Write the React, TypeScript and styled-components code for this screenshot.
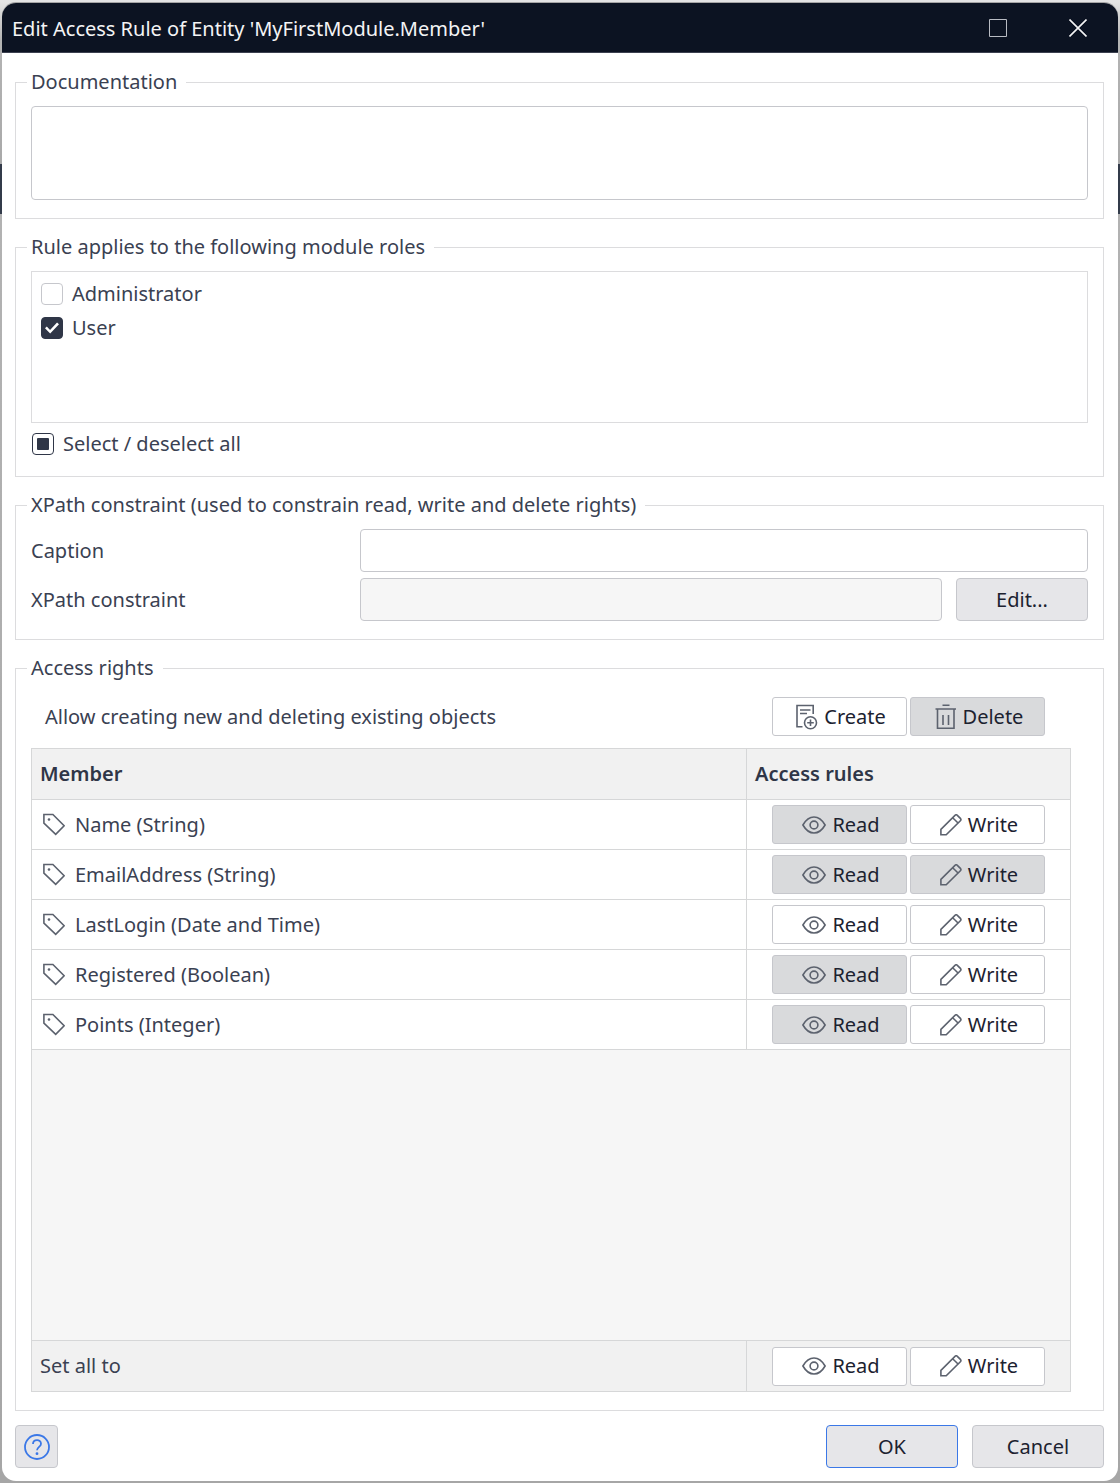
import React, { useEffect, useId, useRef, useState } from "react";
import styled, { createGlobalStyle, css } from "styled-components";

const color = {
  text: "#3a4152",
  strong: "#2f3647",
  ink: "#1c2230",
  icon: "#5c626e",
  groupLine: "#dcdcde",
  gridLine: "#d6d7d8",
  control: "#c6c7cc",
  face: "#e6e6e9",
  pressed: "#d9dadc",
  header: "#f1f1f1",
  empty: "#f6f6f6",
  accent: "#3b78e7",
};

const GlobalStyle = createGlobalStyle`
  *, *::before, *::after { box-sizing: border-box; }
  body {
    margin: 0;
    font-family: "Noto Sans", "Open Sans", sans-serif;
    font-size: 20px;
    line-height: 28px;
    color: ${color.text};
    background: linear-gradient(#e4e4e4 0 2px, #b4b4b4 40px, #a9a9a9 164px, #333b4a 164px 214px, #b2b2b2 214px, #a6a6a6 100%);
  }
  button, input, textarea { font: inherit; color: inherit; }
`;

const Backdrop = styled.div`
  display: flex;
  min-height: 100vh;
  padding: 3px 2px 2px;
`;

const Dialog = styled.main`
  flex: 1;
  min-width: 0;
  display: flex;
  flex-direction: column;
  overflow: hidden;
  background: #fff;
  border-radius: 14px;
  box-shadow: 0 -1px 0 #a5a5a5;
`;

const TitleBar = styled.header`
  display: flex;
  align-items: center;
  height: 50px;
  padding: 2px 12px 0 10px;
  background: #0c1322;
  border-bottom: 1px solid #3c4150;
  color: #f4f4f5;
`;

const Title = styled.h1`
  flex: 1;
  margin: 0;
  font-size: 20px;
  font-weight: 400;
`;

const WindowButtons = styled.div`
  display: flex;
  gap: 24px;
`;

const WindowButton = styled.button`
  display: grid;
  place-items: center;
  width: 56px;
  height: 47px;
  padding: 0 0 2px;
  border: 0;
  background: none;
`;

const Content = styled.form`
  flex: 1;
  display: flex;
  flex-direction: column;
  gap: 14px;
  padding: 15px 14px 12px 13px;
`;

const Group = styled.fieldset`
  min-width: 0;
  margin: 0;
  padding: 0 11px 18px;
  border: 1px solid ${color.groupLine};
`;

const Legend = styled.legend`
  padding: 0 9px 0 4px;
`;

const GroupBody = styled.div`
  display: flex;
  flex-direction: column;
  padding: 10px 4px 0;
`;

const field = css`
  border: 1px solid ${color.control};
  border-radius: 4px;
  background: #fff;
`;

const DocumentationBox = styled.textarea`
  ${field}
  display: block;
  width: 100%;
  height: 94px;
  padding: 8px;
  resize: none;
`;

const RoleList = styled.ul`
  display: flex;
  flex-direction: column;
  gap: 6px;
  min-height: 152px;
  margin: 0;
  padding: 8px 9px;
  border: 1px solid ${color.groupLine};
  list-style: none;
`;

const CheckLabel = styled.label`
  display: flex;
  width: fit-content;
  align-items: center;
  gap: 9px;
`;

const SelectAllRow = styled.div`
  padding: 7px 1px 0;
`;

const CheckBox = styled.input`
  appearance: none;
  display: grid;
  place-items: center;
  width: 22px;
  height: 22px;
  margin: 0;
  border: 1px solid ${color.control};
  border-radius: 4px;
  background: #fff;

  &:checked {
    border-color: ${color.strong};
    background: ${color.strong};
  }
  &:checked::after {
    content: "";
    width: 14px;
    height: 12px;
    background: #fff;
    clip-path: polygon(0 52%, 13% 38%, 36% 66%, 86% 4%, 100% 18%, 37% 96%);
  }
  &:indeterminate {
    border-color: ${color.strong};
  }
  &:indeterminate::after {
    content: "";
    width: 12px;
    height: 12px;
    border-radius: 1px;
    background: ${color.strong};
  }
`;

const FieldGrid = styled.div`
  display: grid;
  grid-template-columns: 315px minmax(0, 1fr);
  align-items: center;
  gap: 6px 14px;
`;

const FieldLine = styled.div`
  display: flex;
  gap: 14px;
`;

const TextInput = styled.input`
  ${field}
  flex: 1;
  min-width: 0;
  height: 43px;
  padding: 0 8px;

  &:read-only {
    background: ${color.empty};
  }
`;

const Button = styled.button<{ $primary?: boolean; $square?: boolean }>`
  display: grid;
  place-items: center;
  width: ${(p) => (p.$square ? 43 : 132)}px;
  height: 43px;
  padding: 0;
  border: 1px solid ${(p) => (p.$primary ? color.accent : color.control)};
  border-radius: 4px;
  background: ${color.face};
  color: ${(p) => (p.$square ? color.accent : color.ink)};
`;

const RightsArea = styled.div`
  padding: 5px 17px 0 0;
`;

const Toolbar = styled.div`
  display: flex;
  align-items: center;
  justify-content: space-between;
  padding: 0 26px 12px 14px;
`;

const Toggles = styled.div`
  display: flex;
  gap: 3px;
`;

const Toggle = styled.button`
  display: flex;
  align-items: center;
  justify-content: center;
  gap: 6px;
  width: 135px;
  height: 39px;
  padding: 0 0 0 3px;
  border: 1px solid ${color.control};
  border-radius: 3px;
  background: #fff;
  color: ${color.ink};

  &[aria-pressed="true"] {
    background: ${color.pressed};
  }
`;

const RightsTable = styled.table`
  width: 100%;
  table-layout: fixed;
  border-collapse: collapse;
  border: 1px solid ${color.gridLine};
`;

const RulesCol = styled.col`
  width: 324px;
`;

const HeadCell = styled.th`
  height: 51px;
  padding: 0 8px;
  border: 1px solid ${color.gridLine};
  background: ${color.header};
  color: ${color.strong};
  font-weight: 600;
  text-align: left;
`;

const NameCell = styled.td<{ $footer?: boolean }>`
  height: ${(p) => (p.$footer ? 51 : 50)}px;
  padding: 0 ${(p) => (p.$footer ? 8 : 11)}px;
  border: 1px solid ${color.gridLine};
  background: ${(p) => (p.$footer ? color.header : "#fff")};
`;

const RulesCell = styled(NameCell)`
  padding: 0 25px;
`;

const Member = styled.span`
  display: flex;
  align-items: center;
  gap: 10px;
`;

const EmptyCell = styled.td`
  height: 291px;
  padding: 0;
  border: 1px solid ${color.gridLine};
  background: ${color.empty};
`;

const Actions = styled.footer`
  display: flex;
  gap: 14px;
`;

const Spacer = styled.div`
  flex: 1;
`;

const Glyph = styled.svg<{ $weight?: number }>`
  flex: none;
  fill: none;
  stroke: currentColor;
  stroke-width: ${(p) => p.$weight ?? 1.6};
`;

const ToolGlyph = styled(Glyph)`
  color: ${color.icon};
`;

const MaximizeGlyph = styled(Glyph)`
  color: #b9bcc3;
`;

const TagIcon = () => (
  <ToolGlyph width="22" height="24" viewBox="0 0 22 24">
    <path d="M.9 1.5h9l11.200 11.200-8.400 8.600L.9 10.100z" />
    <circle cx="6" cy="6.500" r="1.300" fill="currentColor" stroke="none" />
  </ToolGlyph>
);

const EyeIcon = () => (
  <ToolGlyph width="24" height="22" viewBox="0 0 24 22">
    <path d="M.9 11C4 5.600 7.800 3 12 3s8 2.600 11.100 8c-3.100 5.400-6.900 8-11.100 8S4 16.400.9 11z" />
    <circle cx="12" cy="11" r="3.900" />
  </ToolGlyph>
);

const PencilIcon = () => (
  <ToolGlyph width="22" height="22" viewBox="0 0 22 22">
    <path d="M.9 20.700v-5.300L15.200 1.100q1-.7 1.900 0l3.500 3.500q.7 1 0 1.900L6.200 20.700z" />
    <path d="M12.700 3.700l5.300 5.300" />
  </ToolGlyph>
);

const CreateIcon = () => (
  <ToolGlyph width="22" height="26" viewBox="0 0 22 26">
    <path d="M6.500 22.800H1V1.500h16.200V10M4 6h10.500M4 9.500h7" />
    <circle cx="14.500" cy="18.800" r="6" />
    <path d="M14.500 15.500v6.600M11.200 18.800h6.600" />
  </ToolGlyph>
);

const TrashIcon = () => (
  <ToolGlyph width="22" height="26" viewBox="0 0 22 26">
    <path d="M.5 5h20.500M7.500 1.300h7M2.500 5v19.200h16.500V5M8 11v10M13.500 11v10" />
  </ToolGlyph>
);

const HelpIcon = () => (
  <Glyph $weight={1.8} width="28" height="28" viewBox="0 0 28 28">
    <circle cx="14" cy="14" r="12" />
    <path d="M10 11c0-5 8-5 8-.3 0 3-4 3.300-4 6.600" />
    <circle cx="14" cy="20.700" r="1.400" fill="currentColor" stroke="none" />
  </Glyph>
);

type Rights = { read: boolean; write: boolean };
type MemberRow = Rights & { name: string };

const initialMembers: MemberRow[] = [
  { name: "Name (String)", read: true, write: false },
  { name: "EmailAddress (String)", read: true, write: true },
  { name: "LastLogin (Date and Time)", read: false, write: false },
  { name: "Registered (Boolean)", read: true, write: false },
  { name: "Points (Integer)", read: true, write: false },
];

function RightsToggles({ rights, onToggle }: { rights: Rights; onToggle: (key: keyof Rights) => void }) {
  return (
    <Toggles>
      <Toggle type="button" aria-pressed={rights.read} onClick={() => onToggle("read")}>
        <EyeIcon />
        Read
      </Toggle>
      <Toggle type="button" aria-pressed={rights.write} onClick={() => onToggle("write")}>
        <PencilIcon />
        Write
      </Toggle>
    </Toggles>
  );
}

export default function App() {
  const id = useId();
  const [roles, setRoles] = useState([
    { name: "Administrator", on: false },
    { name: "User", on: true },
  ]);
  const [objects, setObjects] = useState({ create: false, remove: true });
  const [members, setMembers] = useState(initialMembers);
  const selectAll = useRef<HTMLInputElement>(null);

  const all = roles.every((r) => r.on);
  const some = roles.some((r) => r.on);

  useEffect(() => {
    if (selectAll.current) selectAll.current.indeterminate = some && !all;
  }, [some, all]);

  const allRights: Rights = {
    read: members.every((m) => m.read),
    write: members.every((m) => m.write),
  };

  return (
    <>
      <GlobalStyle />
      <Backdrop>
        <Dialog>
          <TitleBar>
            <Title>Edit Access Rule of Entity 'MyFirstModule.Member'</Title>
            <WindowButtons>
              <WindowButton type="button" aria-label="Maximize">
                <MaximizeGlyph $weight={1} width="18" height="18" viewBox="0 0 18 18">
                  <path d="M.5.5h17v17H.5z" />
                </MaximizeGlyph>
              </WindowButton>
              <WindowButton type="button" aria-label="Close">
                <Glyph width="18" height="18" viewBox="0 0 18 18">
                  <path d="M.5.5l17 17M17.500.5l-17 17" />
                </Glyph>
              </WindowButton>
            </WindowButtons>
          </TitleBar>

          <Content onSubmit={(e) => e.preventDefault()}>
            <Group>
              <Legend id={`${id}-doc`}>Documentation</Legend>
              <GroupBody>
                <DocumentationBox aria-labelledby={`${id}-doc`} />
              </GroupBody>
            </Group>

            <Group>
              <Legend>Rule applies to the following module roles</Legend>
              <GroupBody>
                <RoleList>
                  {roles.map((role) => (
                    <li key={role.name}>
                      <CheckLabel>
                        <CheckBox
                          type="checkbox"
                          checked={role.on}
                          onChange={() =>
                            setRoles(roles.map((r) => (r === role ? { ...r, on: !r.on } : r)))
                          }
                        />
                        {role.name}
                      </CheckLabel>
                    </li>
                  ))}
                </RoleList>
                <SelectAllRow>
                  <CheckLabel>
                    <CheckBox
                      ref={selectAll}
                      type="checkbox"
                      checked={all}
                      onChange={() => setRoles(roles.map((r) => ({ ...r, on: !all })))}
                    />
                    Select / deselect all
                  </CheckLabel>
                </SelectAllRow>
              </GroupBody>
            </Group>

            <Group>
              <Legend>XPath constraint (used to constrain read, write and delete rights)</Legend>
              <GroupBody>
                <FieldGrid>
                  <label htmlFor={`${id}-caption`}>Caption</label>
                  <FieldLine>
                    <TextInput id={`${id}-caption`} type="text" />
                  </FieldLine>
                  <label htmlFor={`${id}-xpath`}>XPath constraint</label>
                  <FieldLine>
                    <TextInput id={`${id}-xpath`} type="text" readOnly />
                    <Button type="button">Edit...</Button>
                  </FieldLine>
                </FieldGrid>
              </GroupBody>
            </Group>

            <Group>
              <Legend>Access rights</Legend>
              <GroupBody>
                <RightsArea>
                  <Toolbar>
                    <span>Allow creating new and deleting existing objects</span>
                    <Toggles>
                      <Toggle
                        type="button"
                        aria-pressed={objects.create}
                        onClick={() => setObjects({ ...objects, create: !objects.create })}
                      >
                        <CreateIcon />
                        Create
                      </Toggle>
                      <Toggle
                        type="button"
                        aria-pressed={objects.remove}
                        onClick={() => setObjects({ ...objects, remove: !objects.remove })}
                      >
                        <TrashIcon />
                        Delete
                      </Toggle>
                    </Toggles>
                  </Toolbar>
                  <RightsTable>
                    <colgroup>
                      <col />
                      <RulesCol />
                    </colgroup>
                    <thead>
                      <tr>
                        <HeadCell scope="col">Member</HeadCell>
                        <HeadCell scope="col">Access rules</HeadCell>
                      </tr>
                    </thead>
                    <tbody>
                      {members.map((member) => (
                        <tr key={member.name}>
                          <NameCell>
                            <Member>
                              <TagIcon />
                              {member.name}
                            </Member>
                          </NameCell>
                          <RulesCell>
                            <RightsToggles
                              rights={member}
                              onToggle={(key) =>
                                setMembers(
                                  members.map((m) => (m === member ? { ...m, [key]: !m[key] } : m)),
                                )
                              }
                            />
                          </RulesCell>
                        </tr>
                      ))}
                      <tr>
                        <EmptyCell colSpan={2} />
                      </tr>
                    </tbody>
                    <tfoot>
                      <tr>
                        <NameCell $footer>Set all to</NameCell>
                        <RulesCell $footer>
                          <RightsToggles
                            rights={allRights}
                            onToggle={(key) =>
                              setMembers(members.map((m) => ({ ...m, [key]: !allRights[key] })))
                            }
                          />
                        </RulesCell>
                      </tr>
                    </tfoot>
                  </RightsTable>
                </RightsArea>
              </GroupBody>
            </Group>

            <Actions>
              <Button type="button" $square aria-label="Help">
                <HelpIcon />
              </Button>
              <Spacer />
              <Button type="submit" $primary>
                OK
              </Button>
              <Button type="button">Cancel</Button>
            </Actions>
          </Content>
        </Dialog>
      </Backdrop>
    </>
  );
}
